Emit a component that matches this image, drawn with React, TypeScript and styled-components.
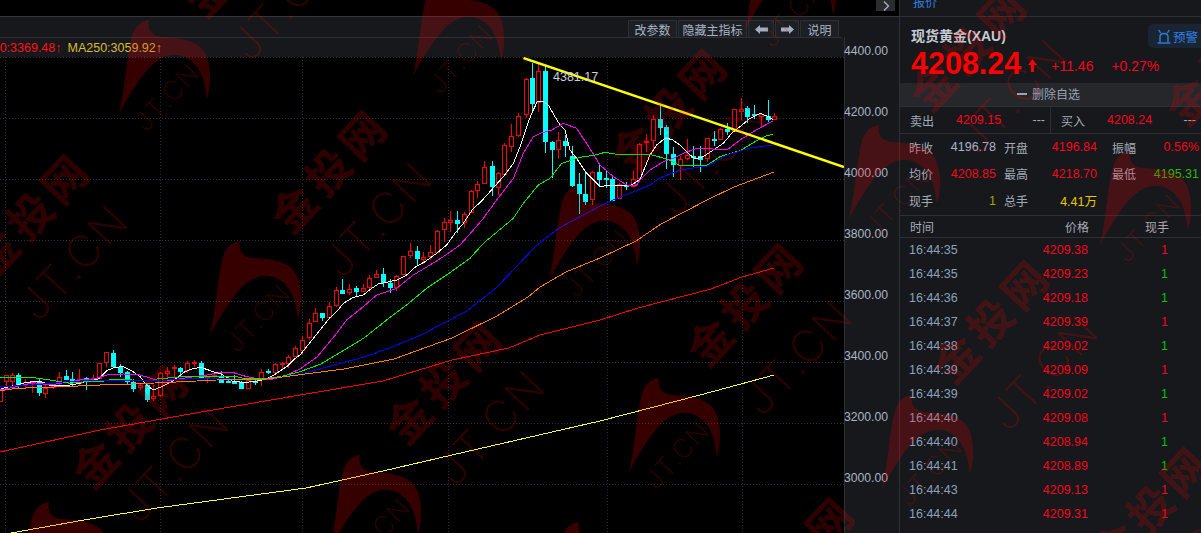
import React from "react";
import styled, { createGlobalStyle } from "styled-components";

const FONT = `"Liberation Sans", "Noto Sans CJK SC", sans-serif`;
const PANEL = "#16181b";
const LINE = "#2e3035";
const RED = "#f5061c";
const GREEN = "#00c000";

const GlobalStyle = createGlobalStyle`
  html, body {
    margin: 0;
    padding: 0;
    background: #000;
    overflow: hidden;
  }
  * {
    box-sizing: border-box;
  }
`;

const Page = styled.div`
  position: relative;
  display: flex;
  width: 1201px;
  height: 533px;
  overflow: hidden;
  font-family: ${FONT};
  background: #000;
`;

/* ---------- chart side ---------- */

const ChartSide = styled.div`
  display: flex;
  flex-direction: column;
  width: 899px;
  height: 100%;
`;

const TopStrip = styled.div`
  display: flex;
  justify-content: flex-end;
  height: 17px;
  padding-right: 4px;
  background: #000;
  border-bottom: 1px solid #34363a;
`;

const CollapseBtn = styled.div`
  display: flex;
  align-items: center;
  justify-content: center;
  width: 19px;
  height: 11px;
  background: #2a2c30;
  color: #a9b2c2;
`;

const Toolbar = styled.div`
  display: flex;
  justify-content: flex-end;
  gap: 1px;
  height: 20px;
  padding: 3px 60px 0 0;
  background: ${PANEL};
`;

const ToolBtn = styled.div<{ $w: number }>`
  display: flex;
  align-items: center;
  justify-content: center;
  width: ${({ $w }) => $w}px;
  height: 17px;
  font-size: 12px;
  color: #aab4c6;
  background: #1c1f24;
  border: 1px solid #2b2e33;
  border-bottom: none;
`;

const Body = styled.div`
  display: flex;
  flex: 1;
  min-height: 0;
`;

const PlotColumn = styled.div`
  display: flex;
  flex-direction: column;
  width: 844px;
`;

const LegendBar = styled.div`
  display: flex;
  align-items: center;
  height: 20px;
  font-size: 12.5px;
  white-space: nowrap;
  overflow: hidden;
  background: ${PANEL};
  border-top: 1px solid ${LINE};
  border-top-right-radius: 3px;
`;

const LegendItem = styled.span<{ $color: string }>`
  color: ${({ $color }) => $color};
  margin-right: 6px;
`;

const LegendClipped = styled(LegendItem)`
  margin-left: -33px;
`;

const Plot = styled.svg`
  display: block;
  flex: 1;
  width: 844px;
  min-height: 0;
  background: #000;
`;

const Axis = styled.div`
  display: flex;
  flex-direction: column;
  gap: 47px;
  width: 55px;
  padding-top: 7px;
  background: ${PANEL};
  border-left: 1px solid ${LINE};
`;

const AxisLabel = styled.span`
  height: 14px;
  margin-left: -1px;
  font-size: 12.2px;
  line-height: 14px;
  color: #aab4c6;
`;

/* ---------- quote panel ---------- */

const Panel = styled.div`
  display: flex;
  flex-direction: column;
  width: 302px;
  height: 100%;
  overflow: hidden;
  background: ${PANEL};
  border-left: 1px solid ${LINE};
`;

const TabBar = styled.div`
  display: flex;
  flex: none;
  height: 17px;
  overflow: hidden;
  border-bottom: 1px solid ${LINE};
`;

const Tab = styled.div`
  width: 52px;
  height: 17px;
  padding-left: 13px;
  font-size: 12px;
  line-height: 7px;
  color: #2f7fe0;
  border-bottom: 1px solid #2f7fe0;
`;

const QuoteHead = styled.div`
  flex: none;
  height: 66px;
  padding: 7px 0 0 11px;
`;

const TitleRow = styled.div`
  display: flex;
  align-items: center;
  justify-content: space-between;
  height: 24px;
`;

const Title = styled.div`
  margin-top: -2px;
  font-size: 14px;
  font-weight: 700;
  color: #c6ccd6;
`;

const AlertBtn = styled.div`
  display: flex;
  align-items: center;
  gap: 2px;
  width: 54px;
  height: 24px;
  margin-right: -1px;
  padding-left: 9px;
  font-size: 12.5px;
  white-space: nowrap;
  color: #2f7fe0;
  background: #1a2533;
  border-radius: 6px 0 0 6px;
`;

const PriceRow = styled.div`
  display: flex;
  align-items: center;
  height: 30px;
`;

const Price = styled.div`
  font-size: 30.5px;
  font-weight: 700;
  line-height: 30px;
  color: #ff0000;
`;

const PriceArrow = styled.svg`
  flex: none;
  margin: 4px 0 0 7px;
`;

const Change = styled.span<{ $ml: number }>`
  margin: 6px 0 0 ${({ $ml }) => $ml}px;
  font-size: 14px;
  color: ${RED};
`;

const DeleteRow = styled.div`
  display: flex;
  flex: none;
  align-items: center;
  justify-content: center;
  gap: 5px;
  height: 24px;
  padding: 0 4px 2px 0;
  font-size: 12px;
  color: #9aa3b3;
  background: #25272b;
  border-bottom: 1px solid ${LINE};
`;

const Minus = styled.span`
  width: 10px;
  height: 2px;
  background: #9aa3b3;
`;

const BidRow = styled.div`
  display: flex;
  flex: none;
  height: 27px;
  border-bottom: 1px solid ${LINE};
`;

const BidCell = styled.div<{ $w: number; $divider?: boolean }>`
  display: grid;
  grid-template-columns: 46px 1fr auto;
  align-items: center;
  width: ${({ $w }) => $w}px;
  padding: 0 5px 0 10px;
  border-right: ${({ $divider }) => ($divider ? `1px solid ${LINE}` : "none")};
`;

const Label = styled.span`
  font-size: 12px;
  color: #a3abba;
`;

const Value = styled.span<{ $color: string }>`
  font-size: 12.5px;
  color: ${({ $color }) => $color};
`;

const StatGrid = styled.div`
  display: grid;
  flex: none;
  grid-template-columns: 87px 93px 87px;
  grid-auto-rows: 26.67px;
  column-gap: 8px;
  height: 82px;
  padding-left: 9px;
  border-bottom: 1px solid ${LINE};
`;

const Stat = styled.div`
  display: flex;
  align-items: center;
  justify-content: space-between;
  &:nth-child(3n) {
    margin-left: 7px;
    margin-right: -7px;
  }
`;

const TableHead = styled.div`
  display: grid;
  flex: none;
  grid-template-columns: 90px 89px 80px;
  align-items: center;
  height: 22px;
  padding-left: 10px;
  font-size: 12px;
  color: #a3abba;
  border-bottom: 1px solid ${LINE};
`;

const RightCell = styled.span`
  text-align: right;
`;

const TradeRow = styled.div`
  display: grid;
  flex: none;
  grid-template-columns: 90px 89px 80px;
  align-items: center;
  height: 24px;
  padding-left: 9px;
  font-size: 12.5px;
`;

const TradeTime = styled.span`
  color: #8ba0bc;
`;

const TradePrice = styled.span`
  text-align: right;
  color: ${RED};
`;

const TradeHand = styled.span<{ $color: string }>`
  text-align: right;
  color: ${({ $color }) => $color};
`;

/* ---------- watermark, it lies over everything ---------- */

const WATERMARK = "rgba(255, 0, 0, 0.21)";

const WatermarkLayer = styled.div`
  position: absolute;
  inset: 0;
  overflow: hidden;
  pointer-events: none;
`;

const WmName = styled.span<{ $x: number; $y: number }>`
  position: absolute;
  left: ${({ $x }) => $x}px;
  top: ${({ $y }) => $y}px;
  padding-left: 6px;
  font-size: 44px;
  font-weight: 700;
  line-height: 1;
  letter-spacing: 6px;
  white-space: nowrap;
  color: ${WATERMARK};
  transform: translate(-50%, -50%) rotate(-47deg);
`;

const WmDomain = styled.span<{ $x: number; $y: number; $size: number }>`
  position: absolute;
  left: ${({ $x }) => $x}px;
  top: ${({ $y }) => $y}px;
  font-family: Inter, Lato, sans-serif;
  font-size: ${({ $size }) => $size}px;
  font-weight: 200;
  line-height: 1;
  letter-spacing: 0.05em;
  white-space: nowrap;
  color: ${WATERMARK};
  transform: translate(-50%, -50%) rotate(-47deg);
`;

const WmSwoosh = styled.svg<{ $x: number; $y: number }>`
  position: absolute;
  left: ${({ $x }) => $x}px;
  top: ${({ $y }) => $y - 96}px;
`;

/* ---------- data ---------- */

type Pt = [number, number];
type Candle = [number, number, number, number, number, "r" | "c"];

// every block is read off a 3x crop, so values stay in crop pixels
const scale = <T extends number[]>(ox: number, oy: number, rows: T[]) =>
  rows.map((r) => [ox + r[0] / 3, oy + r[1] / 3] as Pt);

const candleBlock = (ox: number, oy: number, rows: Candle[]): Candle[] =>
  rows.map(([x, t, b, wt, wb, c]) => [ox + x / 3, oy + t / 3, oy + b / 3, oy + wt / 3, oy + wb / 3, c]);

const candles: Candle[] = [
  ...candleBlock(0, 330, [
    [0, 180, 212, 180, 212, "r"],
    [18, 135, 152, 135, 170, "r"],
    [37, 135, 152, 130, 165, "r"],
    [55, 135, 165, 128, 178, "c"],
    [75, 155, 162, 148, 175, "r"],
    [97, 155, 158, 155, 190, "r"],
    [118, 155, 185, 148, 197, "c"],
    [136, 175, 188, 165, 203, "r"],
    [158, 168, 172, 165, 178, "r"],
    [178, 140, 155, 127, 165, "r"],
    [199, 138, 147, 120, 150, "c"],
    [217, 147, 155, 127, 170, "c"],
    [238, 147, 160, 118, 168, "r"],
    [259, 145, 150, 142, 180, "c"],
    [279, 143, 150, 135, 155, "r"],
    [298, 100, 145, 98, 148, "r"],
    [319, 67, 97, 65, 110, "r"],
    [340, 70, 107, 60, 112, "c"],
    [361, 110, 125, 102, 140, "c"],
    [380, 127, 152, 122, 165, "c"],
    [400, 155, 173, 148, 185, "c"],
    [421, 165, 172, 158, 180, "r"],
    [442, 165, 208, 160, 215, "c"],
    [460, 198, 205, 165, 212, "r"],
    [481, 130, 195, 125, 200, "r"],
    [502, 122, 130, 110, 145, "r"],
    [522, 110, 112, 105, 145, "r"],
    [541, 113, 122, 112, 135, "c"],
    [562, 100, 120, 93, 128, "r"],
    [583, 97, 99, 90, 110, "r"],
    [604, 100, 140, 93, 142, "c"],
    [622, 140, 145, 137, 158, "r"],
    [643, 135, 137, 130, 148, "r"],
    [664, 138, 155, 122, 158, "c"],
    [685, 153, 156, 140, 158, "c"],
    [703, 153, 158, 135, 163, "c"],
    [724, 155, 173, 153, 175, "c"],
    [745, 150, 173, 148, 175, "r"],
    [766, 152, 155, 150, 165, "c"],
    [784, 125, 145, 118, 168, "r"],
    [805, 123, 125, 117, 132, "c"],
    [826, 103, 125, 100, 135, "r"],
    [847, 100, 103, 95, 118, "r"],
    [865, 82, 100, 75, 115, "r"],
    [886, 55, 77, 47, 80, "r"],
    [906, 30, 60, 18, 75, "r"],
    [927, -21, 21, -33, 30, "r"],
  ]),
  ...candleBlock(300, 190, [
    [45, 370, 392, 355, 395, "r"],
    [67, 370, 382, 368, 392, "c"],
    [88, 347, 380, 335, 388, "r"],
    [109, 300, 345, 292, 350, "r"],
    [127, 300, 308, 268, 310, "c"],
    [148, 298, 307, 283, 315, "r"],
    [169, 295, 303, 288, 318, "c"],
    [190, 295, 303, 283, 307, "r"],
    [208, 263, 292, 255, 307, "r"],
    [229, 253, 260, 240, 265, "r"],
    [250, 253, 277, 235, 290, "c"],
    [271, 280, 290, 268, 308, "c"],
    [289, 257, 290, 255, 303, "r"],
    [310, 198, 253, 198, 255, "r"],
    [331, 184, 196, 160, 205, "r"],
    [352, 183, 205, 168, 225, "c"],
    [370, 200, 206, 187, 222, "r"],
    [391, 187, 197, 165, 210, "r"],
    [412, 122, 187, 120, 190, "r"],
    [433, 97, 118, 85, 155, "r"],
    [451, 90, 96, 63, 125, "r"],
    [472, 90, 98, 63, 130, "c"],
    [493, 73, 97, 65, 115, "r"],
    [514, 3, 67, 0, 70, "r"],
    [532, -18, 0, -27, 24, "r"],
  ]),
  ...candleBlock(480, 50, [
    [13, 352, 400, 332, 402, "r"],
    [35, 348, 408, 333, 437, "c"],
    [55, 370, 410, 365, 435, "r"],
    [73, 285, 372, 280, 375, "r"],
    [94, 258, 287, 222, 305, "r"],
    [115, 198, 255, 190, 262, "r"],
    [137, 88, 192, 85, 203, "r"],
    [155, 84, 158, 38, 188, "c"],
    [175, 63, 155, 40, 185, "r"],
    [196, 63, 272, 45, 308, "c"],
    [217, 277, 297, 272, 385, "c"],
    [235, 270, 298, 245, 327, "r"],
    [256, 273, 285, 255, 320, "c"],
    [277, 318, 405, 288, 412, "c"],
    [298, 402, 430, 370, 492, "c"],
    [316, 432, 452, 365, 465, "c"],
    [337, 367, 448, 362, 465, "r"],
    [358, 367, 387, 345, 412, "c"],
    [379, 384, 386, 360, 415, "c"],
    [397, 388, 450, 380, 452, "c"],
    [418, 403, 445, 400, 448, "r"],
    [437, 405, 408, 397, 420, "c"],
    [460, 388, 408, 362, 410, "r"],
    [478, 283, 385, 280, 388, "r"],
    [499, 273, 277, 252, 305, "r"],
  ]),
  ...candleBlock(640, 90, [
    [40, 88, 150, 75, 178, "r"],
    [61, 87, 110, 45, 135, "c"],
    [79, 112, 188, 105, 237, "c"],
    [100, 192, 223, 170, 262, "c"],
    [121, 208, 225, 197, 270, "r"],
    [142, 195, 205, 148, 210, "r"],
    [160, 197, 199, 168, 230, "c"],
    [181, 198, 207, 168, 245, "c"],
    [202, 145, 205, 143, 215, "r"],
    [223, 147, 149, 122, 168, "c"],
    [241, 118, 148, 113, 150, "r"],
    [262, 117, 122, 100, 135, "c"],
    [283, 58, 122, 56, 125, "r"],
    [304, 58, 62, 25, 90, "r"],
    [322, 55, 78, 48, 100, "c"],
    [343, 72, 74, 45, 88, "c"],
    [364, 73, 77, 68, 110, "r"],
    [385, 77, 86, 30, 95, "c"],
    [403, 77, 86, 68, 88, "r"],
  ]),
];

const maLines: { color: string; pts: Pt[] }[] = [
  {
    color: "#ffffff",
    pts: [
      ...scale(0, 330, [[0, 178], [20, 172], [50, 165], [75, 158], [100, 155], [125, 155], [150, 167], [180, 167], [210, 165], [240, 160], [270, 150], [295, 147], [320, 122], [345, 112], [370, 110], [395, 122], [420, 140], [440, 165], [460, 180], [480, 172], [510, 158], [530, 145], [555, 125], [580, 115], [605, 113], [640, 125], [665, 133], [700, 155], [740, 157], [770, 153], [800, 147], [830, 130], [860, 110], [880, 90], [900, 75]]),
      ...scale(300, 190, [[88, 385], [110, 365], [130, 340], [160, 322], [190, 315], [215, 295], [235, 282], [260, 277], [290, 270], [320, 255], [345, 232], [375, 215], [410, 190], [440, 165], [465, 130], [490, 100], [520, 55]]),
      ...scale(480, 50, [[0, 458], [30, 425], [70, 380], [100, 340], [120, 290], [140, 230], [155, 190], [172, 155], [190, 155], [205, 165], [222, 195], [240, 225], [255, 240], [270, 300], [290, 325], [320, 370], [345, 395], [360, 410], [390, 405], [420, 405], [450, 408], [470, 395]]),
      ...scale(640, 90, [[0, 268], [30, 195], [50, 165], [75, 145], [95, 148], [120, 165], [145, 190], [165, 207], [190, 200], [220, 180], [250, 160], [275, 130], [300, 110], [330, 85], [360, 70], [385, 80], [400, 90]]),
    ],
  },
  {
    color: "#ff00ff",
    pts: [
      ...scale(0, 330, [[0, 180], [50, 170], [100, 158], [150, 165], [200, 157], [240, 150], [280, 148], [320, 135], [370, 132], [420, 135], [470, 150], [520, 150], [560, 143], [620, 135], [660, 128], [700, 128], [740, 140], [780, 147], [820, 147], [860, 135], [900, 117]]),
      [[317, 357], [337, 333]] as Pt[],
      ...scale(300, 190, [[140, 390], [190, 350], [230, 315], [290, 295], [340, 255], [390, 225], [430, 200], [480, 165], [520, 120]]),
      ...scale(480, 50, [[10, 505], [50, 450], [100, 385], [130, 310], [160, 260], [180, 250], [215, 240], [250, 220], [290, 235], [320, 280], [360, 345], [400, 380], [440, 405], [470, 405]]),
      ...scale(640, 90, [[0, 270], [30, 240], [70, 215], [100, 205], [130, 190], [170, 175], [220, 177], [265, 177], [300, 150], [340, 125], [400, 92]]),
    ],
  },
  {
    color: "#00f000",
    pts: [
      ...scale(0, 330, [[0, 143], [50, 143], [100, 143], [150, 150], [210, 160], [260, 155], [300, 155], [340, 148], [400, 147], [470, 147], [550, 140], [600, 140], [650, 140], [700, 138], [740, 147], [800, 145], [840, 140], [880, 130], [900, 125]]),
      [[321, 364], [364, 338]] as Pt[],
      ...scale(300, 190, [[260, 390], [320, 345], [380, 295], [440, 255], [510, 205], [550, 160]]),
      ...scale(480, 50, [[100, 505], [130, 460], [175, 405], [210, 385], [245, 340], [300, 322], [345, 315], [375, 307], [410, 313], [470, 313]]),
      ...scale(640, 90, [[0, 193], [30, 193], [80, 207], [120, 227], [200, 227], [240, 200], [300, 182], [350, 152], [380, 137], [400, 133]]),
    ],
  },
  {
    color: "#0000ff",
    pts: [
      ...scale(0, 330, [[0, 170], [100, 165], [200, 155], [300, 150], [400, 150], [500, 150], [600, 145], [700, 147], [800, 147], [900, 133]]),
      [[364, 357], [390, 348], [421, 335], [467, 311], [497, 287], [536, 246], [559, 228], [600, 206], [613, 200], [650, 185], [660, 178], [680, 170], [707, 166], [727, 155], [750, 148], [773, 145]] as Pt[],
    ],
  },
  {
    color: "#ff8000",
    pts: [
      ...scale(0, 330, [[0, 182], [50, 175], [190, 170], [300, 165], [400, 162], [550, 155], [650, 150], [800, 147]]),
      [[344, 369], [394, 359], [452, 338], [497, 316], [528, 297], [540, 287], [566, 272], [600, 258], [636, 241], [661, 224], [707, 200], [734, 187], [774, 172]] as Pt[],
    ],
  },
  {
    color: "#ff0000",
    pts: [[0, 452], [100, 430], [207, 411], [306, 394], [383, 381], [452, 360], [509, 348], [540, 335], [600, 320], [638, 308], [711, 289], [742, 277], [774, 268]],
  },
  {
    color: "#ffff40",
    pts: [[11, 533], [84, 520], [157, 508], [306, 488], [383, 471], [478, 449], [600, 421], [677, 401], [715, 391], [774, 375]],
  },
];

const gridY = [57, 118, 179, 240, 301, 362, 423, 484];
const gridX = [5, 160, 302, 448, 607, 742];
const axisLabels = ["4400.00", "4200.00", "4000.00", "3800.00", "3600.00", "3400.00", "3200.00", "3000.00"];

const names: Pt[] = [[31, 217], [329, 173], [130, 428], [444, 384], [243, -43], [669, 112], [745, 306], [991, 323], [968, 51], [1151, 510], [1224, 65], [796, 560]];
const domains: Pt[] = [[73, 262], [377, 219], [174, 464], [490, 427], [285, 2], [711, 157], [797, 357], [1043, 372], [1012, 96], [1195, 555]];
const swooshes: Pt[] = [[119, 114], [413, 76], [210, 335], [330, 549], [549, 280], [19, 596], [849, 219], [629, 472], [882, 489], [1100, 245], [745, 30], [549, 616]];

const stats: { label?: string; value?: string; color?: string }[] = [
  { label: "昨收", value: "4196.78", color: "#a8b4c8" },
  { label: "开盘", value: "4196.84", color: RED },
  { label: "振幅", value: "0.56%", color: RED },
  { label: "均价", value: "4208.85", color: RED },
  { label: "最高", value: "4218.70", color: RED },
  { label: "最低", value: "4195.31", color: "#2fb510" },
  { label: "现手", value: "1", color: "#a5a500" },
  { label: "总手", value: "4.41万", color: "#e8c800" },
  {},
];

const trades: [string, string, "r" | "g"][] = [
  ["16:44:35", "4209.38", "r"],
  ["16:44:35", "4209.23", "g"],
  ["16:44:36", "4209.18", "g"],
  ["16:44:37", "4209.39", "r"],
  ["16:44:38", "4209.02", "g"],
  ["16:44:39", "4209.09", "r"],
  ["16:44:39", "4209.02", "g"],
  ["16:44:40", "4209.08", "r"],
  ["16:44:40", "4208.94", "g"],
  ["16:44:41", "4208.89", "g"],
  ["16:44:43", "4209.13", "r"],
  ["16:44:44", "4209.31", "r"],
  ["16:44:44", "4208.98", "g"],
];

/* ---------- small drawings ---------- */

const Chevron = () => (
  <svg width="8" height="10" viewBox="0 0 8 10">
    <path d="M2 0.5 L6.5 5 L2 9.5" fill="none" stroke="currentColor" strokeWidth="1.3" />
  </svg>
);

const ToolArrow = ({ flip }: { flip?: boolean }) => (
  <svg width="13" height="9" viewBox="0 0 13 9" style={flip ? { transform: "scaleX(-1)" } : undefined}>
    <path d="M0 4.5 L5 0 V2.5 H13 V6.5 H5 V9 Z" fill="#a3adc0" />
  </svg>
);

const Bell = () => (
  <svg width="14" height="15" viewBox="0 0 14 15" fill="none" stroke="#2f7fe0" strokeWidth="1.4">
    <path d="M3 13.5 V8 C3 5.5 4.8 4.5 7 4.5 C9.2 4.5 11 5.5 11 8 V13.5" />
    <path d="M0.5 14 H13.5" />
    <path d="M3.6 4 L1.8 1 M10.4 4 L12.2 1" />
  </svg>
);

const Chart = () => (
  <Plot viewBox="0 57 844 476">
    {gridY.map((y) => (
      <line key={y} x1="0" x2="844" y1={y + 0.5} y2={y + 0.5} stroke="#2b2d3d" strokeDasharray="1 2" />
    ))}
    {gridX.map((x) => (
      <line key={x} x1={x + 0.5} x2={x + 0.5} y1="57" y2="533" stroke="#2b2d3d" strokeDasharray="1 2" />
    ))}
    <g shapeRendering="crispEdges">
      {candles.map(([x, top, bot, wt, wb, c], i) => {
        const wx = Math.round(x) + 0.5;
        const color = c === "r" ? "#ff0000" : "#00ffff";
        const ty = Math.round(top);
        const h = Math.max(Math.round(bot) - ty, 1);
        return (
          <g key={i}>
            <line x1={wx} x2={wx} y1={Math.round(wt)} y2={Math.round(wb)} stroke={color} />
            {c === "r" ? (
              <rect x={wx - 2} y={ty + 0.5} width="4" height={h} fill="#000" stroke={color} />
            ) : (
              <rect x={wx - 2.5} y={ty} width="5" height={h + 1} fill={color} />
            )}
          </g>
        );
      })}
      {maLines.map((ma) => (
        <polyline
          key={ma.color}
          points={ma.pts.map((p) => p.join(",")).join(" ")}
          fill="none"
          stroke={ma.color}
          strokeWidth="1"
        />
      ))}
    </g>
    <line x1="523.5" y1="58" x2="844" y2="167" stroke="#ffff00" strokeWidth="2.4" />
    <text x="553" y="81" fontFamily={FONT} fontSize="12.5" fill="#c8d0dc">
      4381.17
    </text>
  </Plot>
);

export default function App() {
  return (
    <Page>
      <GlobalStyle />
      <ChartSide>
        <TopStrip>
          <CollapseBtn>
            <Chevron />
          </CollapseBtn>
        </TopStrip>
        <Toolbar>
          <ToolBtn $w={49}>改参数</ToolBtn>
          <ToolBtn $w={69}>隐藏主指标</ToolBtn>
          <ToolBtn $w={26}>
            <ToolArrow />
          </ToolBtn>
          <ToolBtn $w={24}>
            <ToolArrow flip />
          </ToolBtn>
          <ToolBtn $w={39}>说明</ToolBtn>
        </Toolbar>
        <Body>
          <PlotColumn>
            <LegendBar>
              <LegendClipped $color="#ff1018">MA120:3369.48↑</LegendClipped>
              <LegendItem $color="#d8bb38">MA250:3059.92↑</LegendItem>
            </LegendBar>
            <Chart />
          </PlotColumn>
          <Axis>
            {axisLabels.map((label) => (
              <AxisLabel key={label}>{label}</AxisLabel>
            ))}
          </Axis>
        </Body>
      </ChartSide>

      <Panel>
        <TabBar>
          <Tab>报价</Tab>
        </TabBar>
        <QuoteHead>
          <TitleRow>
            <Title>现货黄金(XAU)</Title>
            <AlertBtn>
              <Bell />
              预警
            </AlertBtn>
          </TitleRow>
          <PriceRow>
            <Price>4208.24</Price>
            <PriceArrow width="9" height="13" viewBox="0 0 9 13">
              <path d="M4.5 0 L9 6 H6 V13 H3 V6 H0 Z" fill="#ff0000" />
            </PriceArrow>
            <Change $ml={14}>+11.46</Change>
            <Change $ml={18}>+0.27%</Change>
          </PriceRow>
        </QuoteHead>
        <DeleteRow>
          <Minus />
          删除自选
        </DeleteRow>
        <BidRow>
          <BidCell $w={151} $divider>
            <Label>卖出</Label>
            <Value $color={RED}>4209.15</Value>
            <Value $color="#a3abba">---</Value>
          </BidCell>
          <BidCell $w={150}>
            <Label>买入</Label>
            <Value $color={RED}>4208.24</Value>
            <Value $color="#a3abba">---</Value>
          </BidCell>
        </BidRow>
        <StatGrid>
          {stats.map((s, i) => (
            <Stat key={i}>
              <Label>{s.label}</Label>
              <Value $color={s.color || RED}>{s.value}</Value>
            </Stat>
          ))}
        </StatGrid>
        <TableHead>
          <span>时间</span>
          <RightCell>价格</RightCell>
          <RightCell>现手</RightCell>
        </TableHead>
        {trades.map(([time, price, side], i) => (
          <TradeRow key={i}>
            <TradeTime>{time}</TradeTime>
            <TradePrice>{price}</TradePrice>
            <TradeHand $color={side === "r" ? RED : GREEN}>1</TradeHand>
          </TradeRow>
        ))}
      </Panel>

      <WatermarkLayer>
        {names.map(([x, y]) => (
          <WmName key={`${x}-${y}`} $x={x} $y={y}>
            金投网
          </WmName>
        ))}
        {domains.map(([x, y]) => (
          <WmDomain key={`${x}-${y}`} $x={x} $y={y} $size={44}>
            JT.CN
          </WmDomain>
        ))}
        {swooshes.map(([x, y]) => (
          <React.Fragment key={`${x}-${y}`}>
            <WmSwoosh $x={x} $y={y} width="94" height="96" viewBox="0 -96 94 96">
              <path
                d="M0 0 C6 -25 8 -60 13 -78 C16 -88 22 -93 30 -94 C28 -86 32 -78 42 -77 C62 -76 76 -74 84 -64 C92 -54 93 -30 88 -15 C86 -35 80 -50 68 -56 C56 -63 42 -58 32 -48 C20 -36 8 -15 0 0 Z"
                fill={WATERMARK}
              />
            </WmSwoosh>
            <WmDomain $x={x + 48} $y={y - 17} $size={26}>
              JT.CN
            </WmDomain>
          </React.Fragment>
        ))}
      </WatermarkLayer>
    </Page>
  );
}
